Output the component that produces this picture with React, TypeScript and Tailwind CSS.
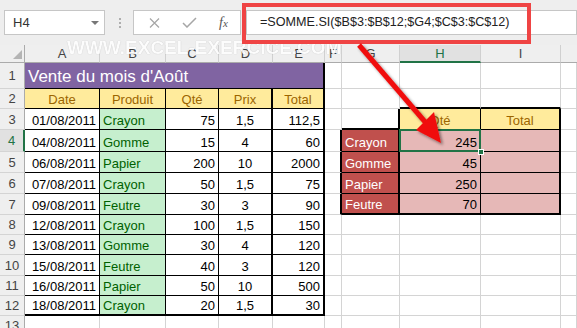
import { Fragment } from "react";
import clsx from "clsx";

const R_G = "border-r border-r-[#d4d4d4]";
const R_K1 = "border-r border-r-black";
const R_K2 = "border-r-2 border-r-black";
const B_G = "border-b border-b-[#d4d4d4]";
const B_K1 = "border-b border-b-black";
const B_K2 = "border-b-2 border-b-black";

const sales = [
  ["01/08/2011", "Crayon", "75", "1,5", "112,5"],
  ["04/08/2011", "Gomme", "15", "4", "60"],
  ["06/08/2011", "Papier", "200", "10", "2000"],
  ["07/08/2011", "Crayon", "50", "1,5", "75"],
  ["09/08/2011", "Feutre", "30", "3", "90"],
  ["12/08/2011", "Crayon", "100", "1,5", "150"],
  ["13/08/2011", "Gomme", "30", "4", "120"],
  ["15/08/2011", "Feutre", "40", "3", "120"],
  ["16/08/2011", "Papier", "50", "10", "500"],
  ["18/08/2011", "Crayon", "20", "1,5", "30"],
];

const summary = [
  ["Crayon", "245"],
  ["Gomme", "45"],
  ["Papier", "250"],
  ["Feutre", "70"],
];

const letters = ["A", "B", "C", "D", "E", "F", "G", "H", "I"];

function Cell({ className, children }: { className?: string; children?: React.ReactNode }) {
  return (
    <div
      className={clsx(
        "relative flex min-w-0 items-end whitespace-nowrap px-[3px] pb-[2px] text-[13px] leading-none",
        className
      )}
    >
      {children}
    </div>
  );
}

function RowHead({ n }: { n: number }) {
  const active = n === 4;
  return (
    <div
      className={clsx(
        "flex items-center justify-center border-b border-b-[#d4d4d4] text-[13px] leading-none",
        active
          ? "border-r-2 border-r-[#217346] bg-[#e1e1e1] text-[#217346]"
          : "border-r border-r-[#ababab] bg-[#efefef] text-[#444]"
      )}
    >
      {n}
    </div>
  );
}

function GrayCells({ count }: { count: number }) {
  return (
    <>
      {Array.from({ length: count }).map((_, i) => (
        <Cell key={i} className={clsx(R_G, B_G)} />
      ))}
    </>
  );
}

function Toolbar() {
  return (
    <div className="flex h-[45px] items-center bg-[#eeeeee] pl-[4px]">
      <div className="flex h-[25px] w-[101px] items-center justify-between border border-[#c6c6c6] bg-white pl-[8px] pr-[5px]">
        <span className="text-[13px] text-[#333]">H4</span>
        <span className="h-0 w-0 border-x-[4px] border-t-[4px] border-x-transparent border-t-[#777]" />
      </div>
      <div className="ml-[14px] flex flex-col gap-[2px]">
        <span className="h-[2px] w-[2px] rounded-full bg-[#999]" />
        <span className="h-[2px] w-[2px] rounded-full bg-[#999]" />
        <span className="h-[2px] w-[2px] rounded-full bg-[#999]" />
      </div>
      <div className="ml-[12px] flex h-[25px] w-[108px] items-center border border-[#c6c6c6] bg-white pl-[15px]">
        <svg width="11" height="10" viewBox="0 0 11 10" className="text-[#a6a6a6]">
          <path d="M1 0.5 L10 9.5 M10 0.5 L1 9.5" stroke="currentColor" strokeWidth="1.2" fill="none" />
        </svg>
        <svg width="15" height="11" viewBox="0 0 15 11" className="ml-[22px] text-[#a6a6a6]">
          <path d="M1 6 L5 10 L14 1" stroke="currentColor" strokeWidth="1.5" fill="none" />
        </svg>
        <span className="ml-[22px] font-['Liberation_Serif',serif] text-[14px] italic text-[#555]">
          f<span className="text-[11px]">x</span>
        </span>
      </div>
      <div className="ml-[5px] flex h-[25px] flex-1 items-center border border-[#c6c6c6] bg-white pl-[13px] text-[12.6px] text-[#222]">
        =SOMME.SI($B$3:$B$12;$G4;$C$3:$C$12)
      </div>
    </div>
  );
}

export default function App() {
  return (
    <div className="relative h-[328px] w-[577px] overflow-hidden bg-white font-['Liberation_Sans',Arial,sans-serif] text-black">
      <Toolbar />

      <div className="grid grid-cols-[25px_75px_66px_53px_54px_52px_17px_58px_81px_80px_1fr] grid-rows-[18px_26px_20px_21px_22px_21px_21px_21px_20px_20px_21px_20px_20px_20px]">
        {/* column headers */}
        <div className="relative border-b border-r border-b-[#ababab] border-r-[#ababab] bg-[#efefef]">
          <span className="absolute bottom-[3px] right-[2px] h-0 w-0 border-b-[9px] border-l-[9px] border-b-[#b4b4b4] border-l-transparent" />
        </div>
        {letters.map((l) => (
          <div
            key={l}
            className={clsx(
              "flex items-center justify-center border-r border-r-[#d0d0d0] text-[13px] leading-none",
              l === "H"
                ? "border-b-2 border-b-[#217346] bg-[#e1e1e1] text-[#217346]"
                : "border-b border-b-[#ababab] bg-[#efefef] text-[#444]"
            )}
          >
            {l}
          </div>
        ))}
        <div className="border-b border-b-[#ababab] bg-[#efefef]" />

        {/* row 1 */}
        <RowHead n={1} />
        <Cell className={clsx("col-span-5 bg-[#8064a2] pb-[3px] text-[17px] text-white", R_K2, B_K1)}>
          Vente du mois d'Août
        </Cell>
        <GrayCells count={5} />

        {/* row 2 */}
        <RowHead n={2} />
        {["Date", "Produit", "Qté", "Prix", "Total"].map((h, i) => (
          <Cell
            key={h}
            className={clsx(
              "justify-center bg-[#ffeb9c] text-[#9c6500]",
              i === 3 || i === 4 ? R_K2 : R_K1,
              B_K1
            )}
          >
            {h}
          </Cell>
        ))}
        <GrayCells count={2} />
        <Cell className={clsx(R_G, B_K2)} />
        <Cell className={clsx(R_G, B_K2)} />
        <Cell className={clsx(R_G, B_G)} />

        {/* rows 3 to 12 */}
        {sales.map((d, i) => {
          const r = i + 3;
          const bb = r === 12 ? B_K2 : B_K1;
          const s = r >= 4 && r <= 7 ? summary[r - 4] : null;
          const sb = r === 7 ? B_K2 : B_K1;
          return (
            <Fragment key={r}>
              <RowHead n={r} />
              <Cell className={clsx("justify-end", R_K1, bb)}>{d[0]}</Cell>
              <Cell className={clsx("bg-[#c6efce] text-[#006100]", R_K1, bb)}>{d[1]}</Cell>
              <Cell className={clsx("justify-end", R_K1, bb)}>{d[2]}</Cell>
              <Cell className={clsx("justify-center", R_K2, bb)}>{d[3]}</Cell>
              <Cell className={clsx("justify-end", R_K2, bb)}>{d[4]}</Cell>
              <Cell className={clsx(s ? R_K2 : R_G, B_G)} />
              {r === 3 ? (
                <>
                  <Cell className={clsx(R_K2, B_K2)} />
                  <Cell className={clsx("justify-center bg-[#ffeb9c] text-[#9c6500]", R_K1, B_K1)}>Qté</Cell>
                  <Cell className={clsx("justify-center bg-[#ffeb9c] text-[#9c6500]", R_K2, B_K1)}>Total</Cell>
                </>
              ) : s ? (
                <>
                  <Cell className={clsx("bg-[#c0504d] text-white", R_K2, sb)}>{s[0]}</Cell>
                  <Cell className={clsx("justify-end bg-[#e6b8b7]", R_K1, sb)}>
                    {s[1]}
                    {r === 4 && (
                      <>
                        <span className="absolute -left-[1px] -top-[1px] bottom-[-1px] right-[-1px] z-10 border-2 border-[#217346]" />
                        <span className="absolute bottom-[-4px] right-[-4px] z-10 h-[6px] w-[6px] border border-white bg-[#217346]" />
                      </>
                    )}
                  </Cell>
                  <Cell className={clsx("bg-[#e6b8b7]", R_K2, sb)} />
                </>
              ) : (
                <GrayCells count={3} />
              )}
              <Cell className={clsx(R_G, B_G)} />
            </Fragment>
          );
        })}

        {/* row 13 */}
        <RowHead n={13} />
        <GrayCells count={10} />
      </div>

      {/* watermark */}
      <div className="pointer-events-none absolute left-[67px] top-[38px] text-[19px] font-bold leading-none text-white opacity-85 [text-shadow:0_0_1px_rgba(0,0,0,0.3)]">
        WWW.EXCEL-EXERCICE.COM
      </div>

      {/* red highlight of the formula */}
      <div className="pointer-events-none absolute left-[242px] top-[3px] h-[41px] w-[289px] border-4 border-[#ef4444]" />

      {/* arrow */}
      <svg className="pointer-events-none absolute left-0 top-0 z-20" width="577" height="328" viewBox="0 0 577 328">
        <defs>
          <filter id="sh" x="-20%" y="-20%" width="140%" height="140%">
            <feDropShadow dx="2" dy="2" stdDeviation="1.5" floodColor="#000" floodOpacity="0.45" />
          </filter>
        </defs>
        <g filter="url(#sh)">
          <line x1="359" y1="45" x2="426" y2="123" stroke="#f01010" strokeWidth="5" />
          <polygon points="441,143 416,130 434,112" fill="#f01010" />
        </g>
      </svg>
    </div>
  );
}
